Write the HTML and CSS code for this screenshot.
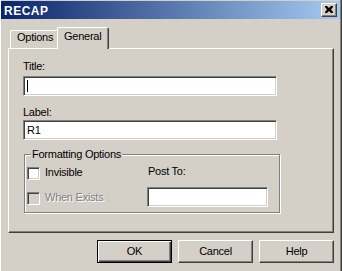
FILE: index.html
```html
<!DOCTYPE html>
<html>
<head>
<meta charset="utf-8">
<link rel="stylesheet" href="styles.css">
</head>
<body>
<div class="window">
  <div class="titlebar">
    <span class="title">RECAP</span>
    <div class="close">
      <svg width="8" height="7" viewBox="0 0 8 7"><path d="M0 0h2l2 2 2-2h2v1l-2 2.5 2 2.5v1h-2l-2-2-2 2h-2v-1l2-2.5-2-2.5z" fill="#000"/></svg>
    </div>
  </div>
  <div class="tabs">
    <div class="tab">Options</div>
    <div class="tab active">General</div>
  </div>
  <div class="panel">
    <div class="field-label first">Title:</div>
    <div class="input wide"><span class="caret"></span></div>
    <div class="field-label second">Label:</div>
    <div class="input wide">R1</div>
    <div class="group">
      <div class="legend">Formatting Options</div>
      <div class="group-cols">
        <div class="col-checks">
          <div class="check"><span class="box"></span><span class="check-text">Invisible</span></div>
          <div class="check disabled"><span class="box"></span><span class="check-text">When Exists</span></div>
        </div>
        <div class="col-post">
          <div class="post-label">Post To:</div>
          <div class="input post"></div>
        </div>
      </div>
    </div>
  </div>
  <div class="buttons">
    <div class="btn default">OK</div>
    <div class="btn">Cancel</div>
    <div class="btn">Help</div>
  </div>
</div>
</body>
</html>
```

FILE: styles.css
```css
* { box-sizing: border-box; }
html, body { margin: 0; padding: 0; }
body {
  background: #D4D0C8;
  font-family: "Liberation Sans", Arial, sans-serif;
  font-size: 11px;
  letter-spacing: -0.25px;
  color: #000;
  width: 342px;
  height: 271px;
  overflow: hidden;
}
.window {
  width: 342px;
  height: 271px;
  border-left: 1px solid #fff;
  border-right: 1px solid #404040;
  box-shadow: inset -1px 0 #808080;
  padding-right: 1px;
  display: flex;
  flex-direction: column;
}
.titlebar {
  margin-top: 1px;
  height: 18px;
  background: linear-gradient(to right, #0A246A, #A6CAF0);
  display: flex;
  align-items: center;
  justify-content: space-between;
  padding-left: 3px;
  padding-right: 3px;
}
.title {
  color: #fff;
  font-weight: bold;
  font-size: 12px;
  letter-spacing: 0.5px;
  line-height: 13px;
  margin-top: 2px;
}
.close {
  width: 16px;
  height: 14px;
  background: #D4D0C8;
  border-top: 1px solid #fff;
  border-left: 1px solid #fff;
  border-right: 1px solid #404040;
  border-bottom: 1px solid #404040;
  box-shadow: inset -1px -1px #808080;
  display: flex;
  align-items: center;
  justify-content: center;
  padding: 0 1px 1px 0;
}
.close svg { display: block; }
.tabs {
  display: flex;
  align-items: flex-start;
  height: 21px;
  margin: 8px 0 0 9px;
  position: relative;
  z-index: 1;
}
.tab {
  margin-top: 3px;
  height: 18px;
  width: 49px;
  border-top: 1px solid #fff;
  border-left: 1px solid #fff;
  border-right: 1px solid #404040;
  box-shadow: inset -1px 0 #808080;
  border-radius: 2px 2px 0 0;
  padding-left: 6px;
  line-height: 13px;
  background: #D4D0C8;
  white-space: nowrap;
}
.tab.active {
  margin-top: 0;
  margin-left: -2px;
  width: 52px;
  height: 22px;
  padding-left: 6px;
  padding-top: 2px;
  position: relative;
  z-index: 2;
}
.panel {
  margin-left: 7px;
  width: 326px;
  height: 185px;
  border-top: 1px solid #fff;
  border-left: 1px solid #fff;
  border-right: 1px solid #404040;
  border-bottom: 1px solid #404040;
  box-shadow: inset -1px -1px #808080;
  padding-left: 14px;
  display: flex;
  flex-direction: column;
}
.field-label { line-height: 13px; height: 13px; }
.field-label.first { margin-top: 11px; margin-bottom: 3px; }
.field-label.second { margin-top: 10px; margin-bottom: 1px; }
.input {
  height: 20px;
  background: #fff;
  border-top: 1px solid #808080;
  border-left: 1px solid #808080;
  border-right: 1px solid #fff;
  border-bottom: 1px solid #fff;
  box-shadow: inset 1px 1px #404040, inset -1px -1px #D4D0C8;
  padding: 0 3px;
  line-height: 18px;
  display: flex;
  align-items: center;
}
.input.wide { width: 254px; }
.caret {
  width: 1px;
  height: 12px;
  background: #000;
}
.group {
  margin-top: 14px;
  margin-left: 1px;
  width: 256px;
  height: 59px;
  border: 1px solid #808080;
  box-shadow: 1px 1px 0 #fff, inset 1px 1px 0 #fff;
  position: relative;
  padding: 12px 0 0 2px;
}
.legend {
  position: absolute;
  top: -7px;
  left: 6px;
  padding: 0 1px;
  background: #D4D0C8;
  line-height: 13px;
  white-space: nowrap;
}
.group-cols {
  display: flex;
}
.col-checks {
  width: 120px;
  display: flex;
  flex-direction: column;
  gap: 12px;
}
.check {
  display: flex;
  align-items: flex-start;
  height: 13px;
}
.box {
  width: 13px;
  height: 13px;
  background: #fff;
  border-top: 1px solid #808080;
  border-left: 1px solid #808080;
  border-right: 1px solid #fff;
  border-bottom: 1px solid #fff;
  box-shadow: inset 1px 1px #404040, inset -1px -1px #D4D0C8;
  flex: none;
}
.check-text {
  margin-left: 5px;
  margin-top: -1px;
  line-height: 13px;
  white-space: nowrap;
}
.check.disabled .box { background: #D4D0C8; }
.check.disabled .check-text {
  color: #808080;
  text-shadow: 1px 1px 0 #fff;
}
.col-post {
  display: flex;
  flex-direction: column;
}
.post-label {
  margin-top: -2px;
  margin-left: 1px;
  line-height: 13px;
  height: 13px;
}
.input.post {
  margin-top: 9px;
  width: 121px;
}
.buttons {
  margin-top: 7px;
  display: flex;
  justify-content: flex-end;
  gap: 6px;
  padding-right: 6px;
}
.btn {
  width: 75px;
  height: 23px;
  border-top: 1px solid #fff;
  border-left: 1px solid #fff;
  border-right: 1px solid #404040;
  border-bottom: 1px solid #404040;
  box-shadow: inset -1px -1px #808080;
  display: flex;
  align-items: center;
  justify-content: center;
  line-height: 13px;
}
.btn.default {
  border: 1px solid #000;
  box-shadow: inset 1px 1px #fff, inset -1px -1px #404040, inset -2px -2px #808080;
}
```
